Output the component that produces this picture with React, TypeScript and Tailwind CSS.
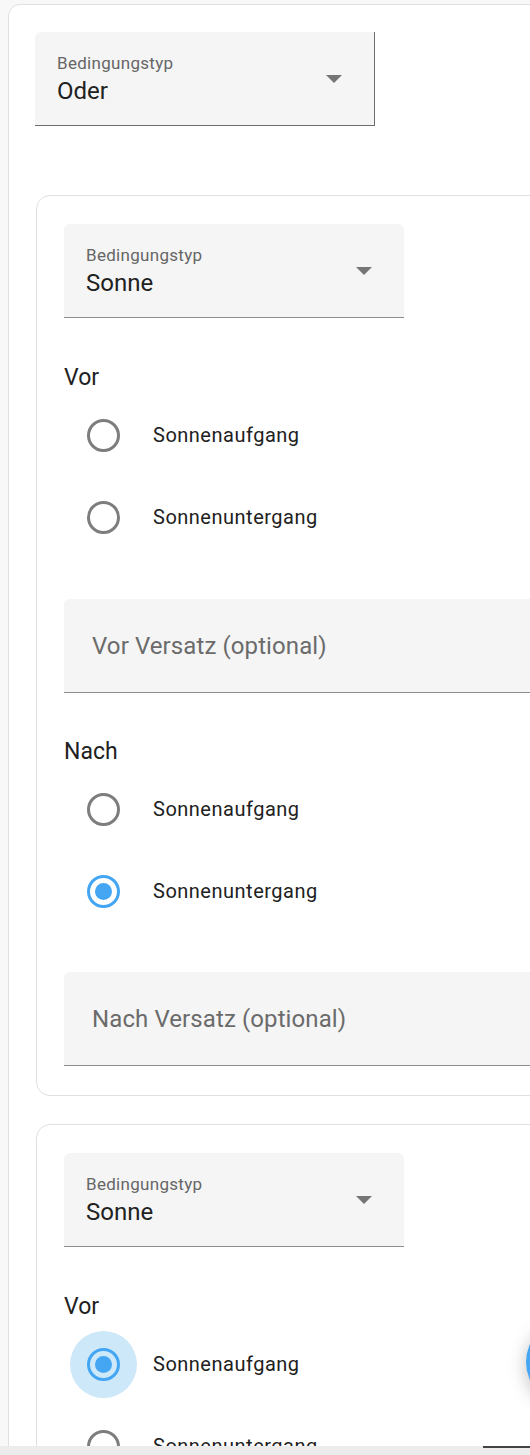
import React from 'react';

const font = { fontFamily: 'Roboto, "Noto Sans", Arial, sans-serif' };

const Arrow: React.FC = () => (
  <svg width="16" height="8" viewBox="0 0 16 8" className="shrink-0">
    <path d="M0 0 L16 0 L8 8 Z" fill="#757575" />
  </svg>
);

const Select: React.FC<{ value: string; dark?: boolean }> = ({ value, dark }) => (
  <div
    className={`w-[340px] h-[94px] bg-[#f5f5f5] rounded-t-[6px] flex items-center justify-between pl-[22px] pr-[32px] ${
      dark ? 'border-b-[1.5px] border-r border-[#6d6d6d] rounded-tr-none' : 'border-b-[1.5px] border-[#8d8d8d]'
    }`}
  >
    <div className="flex flex-col pt-[1px]">
      <span className="text-[17px] leading-[24px] tracking-[0.3px] text-[#666666]">Bedingungstyp</span>
      <span className="text-[24px] leading-[32px] text-[#212121]">{value}</span>
    </div>
    <Arrow />
  </div>
);

const Radio: React.FC<{ label: string; checked?: boolean; focused?: boolean }> = ({ label, checked, focused }) => (
  <div className="h-[82px] flex items-center">
    <div
      className={`ml-[6px] w-[67px] h-[67px] rounded-full flex items-center justify-center ${
        focused ? 'bg-[#cde8f9]' : ''
      }`}
    >
      <div
        className={`w-[33px] h-[33px] rounded-full border-[3px] flex items-center justify-center ${
          checked ? 'border-[#44a6f3]' : 'border-[#7d7d7d]'
        }`}
      >
        {checked && <div className="w-[17px] h-[17px] rounded-full bg-[#44a6f3]" />}
      </div>
    </div>
    <span className="ml-[16px] text-[20px] tracking-[0.5px] text-[#212121]">{label}</span>
  </div>
);

const TextField: React.FC<{ placeholder: string }> = ({ placeholder }) => (
  <div className="w-[560px] h-[94px] bg-[#f5f5f5] rounded-tl-[6px] border-b-[1.5px] border-[#8d8d8d] flex items-center pl-[28px]">
    <span className="text-[24px] tracking-[0.1px] text-[#6b6b6b]">{placeholder}</span>
  </div>
);

const Heading: React.FC<{ children: React.ReactNode }> = ({ children }) => (
  <div className="h-[32px] flex items-center text-[23px] text-[#212121]">{children}</div>
);

const SunCard: React.FC<{ vorChecked?: number; nachChecked?: number; short?: boolean }> = ({
  vorChecked,
  nachChecked,
  short,
}) => (
  <div className="ml-[1px] border border-[#e0e0e0] rounded-[14px] pt-[28px] pl-[27px] pb-[29px]">
    <Select value="Sonne" />
    <div className="mt-[44px]">
      <Heading>Vor</Heading>
    </div>
    <Radio label="Sonnenaufgang" checked={vorChecked === 0} focused={short && vorChecked === 0} />
    <Radio label="Sonnenuntergang" checked={vorChecked === 1} />
    {!short && (
      <>
        <div className="mt-[41px]">
          <TextField placeholder="Vor Versatz (optional)" />
        </div>
        <div className="mt-[43px]">
          <Heading>Nach</Heading>
        </div>
        <Radio label="Sonnenaufgang" checked={nachChecked === 0} />
        <Radio label="Sonnenuntergang" checked={nachChecked === 1} />
        <div className="mt-[40px]">
          <TextField placeholder="Nach Versatz (optional)" />
        </div>
      </>
    )}
  </div>
);

export default function App() {
  return (
    <div className="relative w-[530px] h-[1455px] overflow-hidden bg-[#f8f8f8]" style={font}>
      <div className="mt-[4px] ml-[8px] w-[640px] bg-white border border-[#e0e0e0] rounded-[12px] pt-[27px] pl-[26px] pb-[200px]">
        <Select value="Oder" dark />
        <div className="mt-[69px] flex flex-col gap-[28px]">
          <SunCard nachChecked={1} />
          <SunCard vorChecked={0} short />
        </div>
      </div>

      {/* floating action button peeking in from the right */}
      <div className="absolute left-[526px] top-[1320px] w-[84px] h-[84px] rounded-full bg-[#44a6f3] shadow-[0_4px_18px_rgba(0,0,0,0.25)]" />

      {/* bottom bar */}
      <div className="absolute left-0 bottom-0 w-full h-[9px] bg-[#ececec]">
        <div className="absolute left-[483px] top-0 w-[47px] h-[2px] bg-[#444444]" />
      </div>
    </div>
  );
}
